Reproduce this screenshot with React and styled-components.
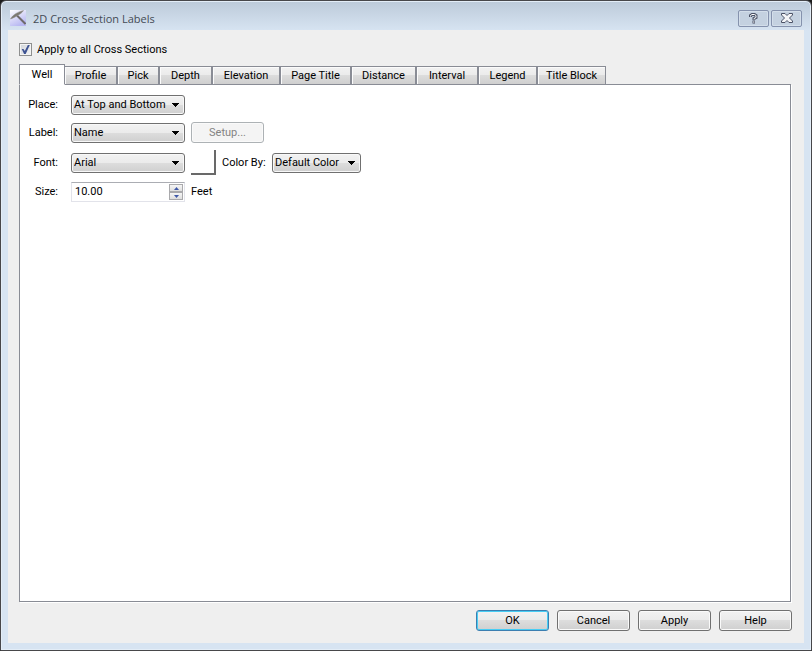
import React, { useState } from 'react'
import styled, { createGlobalStyle } from 'styled-components'

const tabs = [
    { name: 'Well', width: 46 },
    { name: 'Profile', width: 52 },
    { name: 'Pick', width: 42 },
    { name: 'Depth', width: 53 },
    { name: 'Elevation', width: 68 },
    { name: 'Page Title', width: 71 },
    { name: 'Distance', width: 65 },
    { name: 'Interval', width: 62 },
    { name: 'Legend', width: 59 },
    { name: 'Title Block', width: 69 },
]

const Dropdown = ({ id, options, width }) => (
    <SelectWrap $width={width}>
        <Select id={id}>
            {options.map((option) => <option key={option}>{option}</option>)}
        </Select>
        <Arrow viewBox="0 0 7 4" aria-hidden="true">
            <path d="M0 0h7v1h-1v1h-1v1h-1v1h-1v-1h-1v-1h-1v-1h-1z" fill="#000" shapeRendering="crispEdges" />
        </Arrow>
    </SelectWrap>
)

const PickaxeIcon = () => (
    <svg width="16" height="16" viewBox="0 0 16 16" aria-hidden="true">
        <defs>
            <linearGradient id="sky" x1="0" y1="0" x2="0.5" y2="1">
                <stop offset="0" stopColor="#ffffff" />
                <stop offset="1" stopColor="#b9b9f2" />
            </linearGradient>
        </defs>
        <rect width="16" height="16" fill="url(#sky)" />
        <path d="M7 5.500L15.500 14" stroke="#6f6b6c" strokeWidth="2" />
        <path d="M13.500 0.500C12 3 10 4 8.500 5C6 6.500 3.500 8 0.500 9C1.500 7 3.500 5 6 3.500C8.500 2 11 1 13.500 0.500Z" fill="#7d7a72" stroke="#8f8c86" strokeWidth="0.500" />
    </svg>
)

const App = () => {
    const [active, setActive] = useState('Well')
    const [size, setSize] = useState('10.00')
    const step = (amount) => setSize((Number(size) + amount).toFixed(2))

    return (
        <>
            <GlobalStyle />
            <Dialog>
                <TitleBar>
                    <PickaxeIcon />
                    <Title>2D Cross Section Labels</Title>
                    <TitleButton aria-label="Help">
                        <svg width="9" height="11" viewBox="0 0 9 11">
                            <path d="M1.500 4V2.500L3 1.500H5.500L7 2.500V4.500L5 5.500V7M3.500 9H6" fill="none" stroke="#4b5266" strokeWidth="3" />
                            <path d="M1.500 3.500V2.500L3 1.500H5.500L7 2.500V4.500L5 5.500V6.500M4 9H5.500" fill="none" stroke="#fff" strokeWidth="1" />
                        </svg>
                    </TitleButton>
                    <TitleButton aria-label="Close">
                        <svg width="12" height="10" viewBox="0 0 12 10">
                            <path d="M0.500 0.500H4L6 2.500L8 0.500H11.500V2L8.500 5L11.500 8V9.500H8L6 7.500L4 9.500H0.500V8L3.500 5L0.500 2Z" fill="#f4f5f8" stroke="#4b5266" />
                        </svg>
                    </TitleButton>
                </TitleBar>
                <Body>
                    <CheckLabel>
                        <Checkbox type="checkbox" defaultChecked />
                        Apply to all Cross Sections
                    </CheckLabel>
                    <TabBar role="tablist">
                        {tabs.map(({ name, width }) => (
                            <Tab
                                key={name}
                                role="tab"
                                aria-selected={active === name}
                                $active={active === name}
                                $width={width}
                                onClick={() => setActive(name)}
                            >
                                {name}
                            </Tab>
                        ))}
                    </TabBar>
                    <Panel role="tabpanel">
                        <Row>
                            <Label htmlFor="place">Place:</Label>
                            <Dropdown id="place" width={114} options={['At Top and Bottom', 'At Top', 'At Bottom']} />
                        </Row>
                        <Row>
                            <Label htmlFor="label">Label:</Label>
                            <Dropdown id="label" width={114} options={['Name', 'None']} />
                            <Button disabled>Setup...</Button>
                        </Row>
                        <Row>
                            <Label htmlFor="font">Font:</Label>
                            <Dropdown id="font" width={114} options={['Arial', 'Tahoma']} />
                            <Swatch aria-label="Font color" />
                            <InlineLabel htmlFor="color">Color By:</InlineLabel>
                            <Dropdown id="color" width={89} options={['Default Color']} />
                        </Row>
                        <Row>
                            <Label htmlFor="size">Size:</Label>
                            <SpinBox>
                                <SpinInput id="size" value={size} onChange={(e) => setSize(e.target.value)} />
                                <SpinButtons>
                                    <SpinButton aria-label="Increase" onClick={() => step(1)}>
                                        <svg width="5" height="3" viewBox="0 0 5 3"><path d="M0 3L2.500 0L5 3Z" fill="#3f58a8" /></svg>
                                    </SpinButton>
                                    <SpinButton aria-label="Decrease" onClick={() => step(-1)}>
                                        <svg width="5" height="3" viewBox="0 0 5 3"><path d="M0 0H5L2.500 3Z" fill="#3f58a8" /></svg>
                                    </SpinButton>
                                </SpinButtons>
                            </SpinBox>
                            <span>Feet</span>
                        </Row>
                    </Panel>
                    <Footer>
                        <Button $primary>OK</Button>
                        <Button>Cancel</Button>
                        <Button>Apply</Button>
                        <Button>Help</Button>
                    </Footer>
                </Body>
            </Dialog>
        </>
    )
}

const GlobalStyle = createGlobalStyle`
    * {
        box-sizing: border-box;
    }
    body {
        margin: 0;
        background: #1c1c1c;
        font-family: Roboto, Tahoma, sans-serif;
        font-size: 11px;
        line-height: 14px;
        color: #000;
    }
    button, input, select {
        font: inherit;
        color: inherit;
        margin: 0;
    }
`

const Dialog = styled.div`
    display: flex;
    flex-direction: column;
    min-height: 100vh;
    padding: 0 7px 7px;
    border: 1px solid #47474a;
    border-radius: 6px 6px 0 0;
    background: linear-gradient(#bccad9, #d7e4f2 30px);
    box-shadow: inset 0 0 0 1px #e3edf7;
`

const TitleBar = styled.div`
    display: flex;
    align-items: center;
    gap: 2px;
    height: 29px;
    padding: 5px 2px 0;
`

const Title = styled.div`
    flex: 1;
    padding: 2px 0 0 5px;
    font-family: "Open Sans", "Segoe UI", sans-serif;
    color: #444b55;
`

const TitleButton = styled.button`
    display: flex;
    align-items: center;
    justify-content: center;
    width: 31px;
    height: 17px;
    padding: 0;
    border: 1px solid #8592ad;
    border-radius: 2px;
    background: #c4d1e0;
    box-shadow: inset 0 0 0 1px #d3deea;
`

const Body = styled.div`
    flex: 1;
    display: flex;
    flex-direction: column;
    padding: 12px;
    padding-left: 11px;
    background: #efefef;
`

const CheckLabel = styled.label`
    display: flex;
    align-items: center;
    align-self: flex-start;
    gap: 5px;
    height: 15px;
    margin-bottom: 7px;
`

const Checkbox = styled.input`
    appearance: none;
    width: 13px;
    height: 13px;
    padding: 1px;
    border: 1px solid #8e8f8f;
    background: linear-gradient(135deg, #cfd3d9, #f6f6f6);
    box-shadow: inset 0 0 0 1px #f4f4f4;

    &:checked::after {
        content: '';
        display: block;
        width: 9px;
        height: 9px;
        background: #3f5493;
        clip-path: polygon(8% 45%, 28% 45%, 42% 68%, 76% 0, 98% 0, 52% 100%, 34% 100%);
    }
`

const TabBar = styled.div`
    display: flex;
    align-items: flex-end;
    height: 21px;
    margin-bottom: -1px;
    z-index: 1;
`

const Tab = styled.button`
    width: ${({ $width }) => $width}px;
    height: ${({ $active }) => ($active ? 21 : 19)}px;
    padding: 0;
    border: 1px solid #898c95;
    border-bottom-color: ${({ $active }) => ($active ? '#fff' : '#898c95')};
    background: ${({ $active }) => ($active ? '#fff' : 'linear-gradient(#f2f2f2, #ebebeb 45%, #dcdcdc 50%, #cfcfcf)')};
    box-shadow: ${({ $active }) => ($active ? 'none' : 'inset 1px 1px #fbfbfb')};
    text-align: center;

    &[aria-selected='true'] + & {
        border-left-width: 0;
    }
`

const Panel = styled.div`
    flex: 1;
    display: flex;
    flex-direction: column;
    gap: 7px;
    padding: 10px 6px;
    margin-bottom: 8px;
    border: 1px solid #898c95;
    background: #fff;
    box-shadow: 1px 1px #fff;
    margin-right: 1px;
`

const Row = styled.div`
    display: flex;
    align-items: center;
    gap: 6px;
`

const Label = styled.label`
    width: 32px;
    margin-right: 7px;
    text-align: right;
    white-space: nowrap;
`

const InlineLabel = styled.label`
    width: 44px;
    white-space: nowrap;
`

const SelectWrap = styled.div`
    position: relative;
    width: ${({ $width }) => $width}px;
    height: 20px;
`

const Select = styled.select`
    appearance: none;
    width: 100%;
    height: 100%;
    padding: 0 16px 0 2px;
    border: 1px solid #707070;
    border-radius: 3px;
    background: linear-gradient(#f2f2f2, #ebebeb 48%, #dddddd 50%, #cfcfcf);
    box-shadow: inset 0 0 0 1px #f8f8f8;
`

const Arrow = styled.svg`
    position: absolute;
    right: 6px;
    top: 8px;
    width: 7px;
    height: 4px;
    pointer-events: none;
`

const Button = styled.button`
    width: 73px;
    height: 21px;
    padding: 0;
    border: 1px solid ${({ $primary }) => ($primary ? '#3c7fb1' : '#707070')};
    border-radius: 3px;
    background: linear-gradient(#f2f2f2, #ebebeb 48%, #dddddd 50%, #cfcfcf);
    box-shadow: inset 0 0 0 1px ${({ $primary }) => ($primary ? '#48cdf4' : '#fafafa')};

    &:disabled {
        border-color: #adb2b5;
        background: #f4f4f4;
        color: #838383;
    }
`

const Swatch = styled.button`
    width: 25px;
    height: 25px;
    padding: 0;
    border: 0 solid #696969;
    border-width: 0 2px 2px 0;
    background: #fff;
`

const SpinBox = styled.div`
    display: flex;
    width: 114px;
    height: 20px;
    padding: 1px;
    border: 1px solid #e2e3ea;
    border-top-color: #abadb3;
`

const SpinInput = styled.input`
    flex: 1;
    min-width: 0;
    padding: 0 2px;
    border: 0;
    outline: 0;
    background: #fff;
`

const SpinButtons = styled.div`
    display: flex;
    flex-direction: column;
    width: 14px;
`

const SpinButton = styled.button`
    flex: 1;
    display: flex;
    align-items: center;
    justify-content: center;
    min-height: 0;
    padding: 0;
    border: 1px solid #a9a9ac;
    background: linear-gradient(#f6f6f6, #dedede);
`

const Footer = styled.div`
    display: flex;
    justify-content: flex-end;
    gap: 8px;
`

export default App
